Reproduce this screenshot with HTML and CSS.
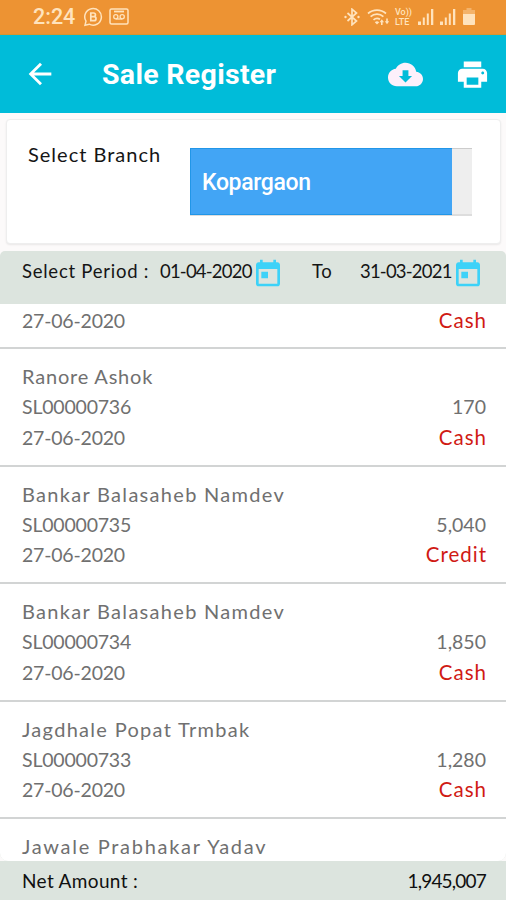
FILE: index.html
```html
<!DOCTYPE html>
<html lang="en">
<head>
    <meta charset="UTF-8">
    <meta name="viewport" content="width=device-width, initial-scale=1.0">
    <title>Sale Register</title>
    <link rel="stylesheet" href="styles.css">
</head>
<body>
    <div class="status-bar">
        <span class="clock">2:24</span>
        <svg class="status-chat" width="20" height="20" viewBox="0 0 20 20">
            <path d="M2 18.2l1-4A8.300 8.300 0 1 1 6.200 17.200z" fill="none" stroke="currentColor" stroke-width="1.500"/>
            <path d="M7.800 6h2.800a1.800 1.800 0 0 1 0 3.700H7.800zM7.800 9.700h3.200a2 2 0 0 1 0 4H7.800z" fill="none" stroke="currentColor" stroke-width="1.700"/>
        </svg>
        <svg class="status-voicemail" width="20" height="17" viewBox="0 0 20 17">
            <rect x="1" y="1" width="18" height="15" rx="1.500" fill="none" stroke="currentColor" stroke-width="1.500"/>
            <path d="M5 3.500h10" stroke="currentColor" stroke-width="1.800"/>
            <g fill="none" stroke="currentColor" stroke-width="1.300">
                <circle cx="6.800" cy="8.800" r="2.100"/>
                <circle cx="13.200" cy="8.800" r="2.100"/>
                <path d="M6.800 11h6.400"/>
            </g>
        </svg>
        <div class="status-icons">
            <svg width="16" height="18" viewBox="0 0 16 18">
                <path d="M3.500 5l9 8L8 16.800V1.200L12.500 5l-9 8" fill="none" stroke="currentColor" stroke-width="1.700"/>
                <circle cx="1.500" cy="9" r="1.200" fill="currentColor"/>
                <circle cx="14.500" cy="9" r="1.200" fill="currentColor"/>
            </svg>
            <svg class="wifi" width="23" height="18" viewBox="0 0 23 18">
                <g fill="none" stroke="currentColor" stroke-width="1.700">
                    <path d="M1 5.500a13.500 13.500 0 0 1 18 0M3.600 8.700a9.500 9.500 0 0 1 12.800 0M6.500 11.800a5.500 5.500 0 0 1 6.500-.6"/>
                </g>
                <path d="M7.800 14.200q2.200-1.800 4.400 0L10 16.600zM12.600 14.300l2.200-3 2.200 3h-1.400v2.700H14v-2.700zM17.800 13.200h1.400v-2.600h1.600v2.600h1.400l-2.200 3z" fill="currentColor"/>
            </svg>
            <span class="volte"><span>Vo))</span><span>LTE</span></span>
            <svg class="signal" width="16" height="17" viewBox="0 0 16 17" fill="currentColor">
                <path d="M0 13.500h3V17H0zM4.800 9.500h2V17h-2zM8.800 5.500h2V17h-2zM13 1h2.300v16H13z"/>
            </svg>
            <svg class="signal" width="16" height="17" viewBox="0 0 16 17" fill="currentColor">
                <path d="M0 13.500h3V17H0zM4.800 9.500h2V17h-2zM8.800 5.500h2V17h-2zM13 1h2.300v16H13z"/>
            </svg>
            <svg class="battery" width="12" height="17" viewBox="0 0 12 17" fill="currentColor">
                <path d="M3.500 0h5v2H12v4H0V2h3.500z" opacity=".4"/>
                <path d="M0 6h12v10a1 1 0 0 1-1 1H1a1 1 0 0 1-1-1z"/>
            </svg>
        </div>
    </div>

    <header class="app-bar">
        <svg class="back" width="34" height="34" viewBox="0 0 24 24">
            <path d="M20 11H7.830l5.590-5.590L12 4l-8 8 8 8 1.410-1.410L7.830 13H20v-2z" fill="currentColor"/>
        </svg>
        <h1>Sale Register</h1>
        <svg class="download" width="35" height="35" viewBox="0 0 24 24">
            <path d="M19.350 10.040C18.670 6.590 15.640 4 12 4 9.110 4 6.600 5.640 5.350 8.040 2.340 8.360 0 10.910 0 14c0 3.310 2.690 6 6 6h13c2.760 0 5-2.240 5-5 0-2.640-2.050-4.780-4.650-4.960zM16.500 13L12 17.500 7.500 13H10V9h4v4z" fill="currentColor"/>
        </svg>
        <svg class="print" width="35" height="35" viewBox="0 0 24 24">
            <path d="M19 8H5c-1.660 0-3 1.340-3 3v6h4v4h12v-4h4v-6c0-1.660-1.340-3-3-3zm-3 11H8v-5h8v5zm3-7c-.55 0-1-.45-1-1s.45-1 1-1 1 .45 1 1-.45 1-1 1zm-1-9H6v4h12V3z" fill="currentColor"/>
        </svg>
    </header>

    <section class="branch-card">
        <label>Select Branch</label>
        <div class="branch-select">
            <div class="branch-value">Kopargaon</div>
        </div>
    </section>

    <section class="period">
        <span class="period-label">Select Period :</span>
        <span class="period-date">01-04-2020</span>
        <svg width="32" height="32" viewBox="0 0 24 24">
            <path d="M19 4h-1V2h-2v2H8V2H6v2H5c-1.110 0-1.990.9-1.990 2L3 20c0 1.100.89 2 2 2h14c1.100 0 2-.9 2-2V6c0-1.100-.9-2-2-2zm0 16H5V9h14v11zM7 11h5v5H7z" fill="currentColor"/>
        </svg>
        <span class="period-to">To</span>
        <span class="period-date">31-03-2021</span>
        <svg width="32" height="32" viewBox="0 0 24 24">
            <path d="M19 4h-1V2h-2v2H8V2H6v2H5c-1.110 0-1.990.9-1.990 2L3 20c0 1.100.89 2 2 2h14c1.100 0 2-.9 2-2V6c0-1.100-.9-2-2-2zm0 16H5V9h14v11zM7 11h5v5H7z" fill="currentColor"/>
        </svg>
    </section>

    <main class="sales">
        <div class="sale sale-cut">
            <div class="line"><span class="num">27-06-2020</span><span class="mode">Cash</span></div>
        </div>
        <div class="sale">
            <div class="line name name-short">Ranore Ashok</div>
            <div class="line"><span class="num">SL00000736</span><span class="amount">170</span></div>
            <div class="line"><span class="num">27-06-2020</span><span class="mode">Cash</span></div>
        </div>
        <div class="sale">
            <div class="line name">Bankar Balasaheb Namdev</div>
            <div class="line"><span class="num">SL00000735</span><span class="amount">5,040</span></div>
            <div class="line"><span class="num">27-06-2020</span><span class="mode">Credit</span></div>
        </div>
        <div class="sale">
            <div class="line name">Bankar Balasaheb Namdev</div>
            <div class="line"><span class="num">SL00000734</span><span class="amount">1,850</span></div>
            <div class="line"><span class="num">27-06-2020</span><span class="mode">Cash</span></div>
        </div>
        <div class="sale">
            <div class="line name">Jagdhale Popat Trmbak</div>
            <div class="line"><span class="num">SL00000733</span><span class="amount">1,280</span></div>
            <div class="line"><span class="num">27-06-2020</span><span class="mode">Cash</span></div>
        </div>
        <div class="sale">
            <div class="line name name-wide">Jawale Prabhakar Yadav</div>
        </div>
    </main>

    <footer class="total">
        <span class="total-label">Net Amount :</span>
        <span class="total-value">1,945,007</span>
    </footer>
</body>
</html>
```
FILE: styles.css
```css
:root {
    --status-color: #ed9333;
    --bar-color: #00bcd9;
    --band-color: #dce4de;
    --text-color: #707070;
    --mode-color: #d01a14;
}

* {
    box-sizing: border-box;
}

body {
    margin: 0;
    height: 900px;
    overflow: hidden;
    display: flex;
    flex-direction: column;
    background-color: #fcfafa;
    font-family: "Century Gothic", Lato, sans-serif;
    color: #151515;
}

svg {
    display: block;
    flex: none;
}

.status-bar {
    height: 35px;
    flex: none;
    display: flex;
    align-items: center;
    padding: 0 31px 1px 33px;
    background-color: var(--status-color);
    border-bottom: 1px solid #d5962f;
    color: #ffe3bd;
}

.clock {
    width: 50px;
    font-family: Roboto, sans-serif;
    font-size: 21.5px;
    font-weight: 500;
}

.status-voicemail {
    margin-left: 6px;
}

.status-icons {
    display: flex;
    align-items: center;
    margin-left: auto;
}

.wifi {
    margin-left: 7px;
}

.volte {
    width: 17px;
    margin: 0 6px 0 5px;
    display: flex;
    flex-direction: column;
    font-family: Roboto, sans-serif;
    font-size: 9px;
    line-height: 10px;
    font-weight: 500;
}

.signal {
    margin-right: 6px;
}

.battery {
    margin-left: 1px;
}

.app-bar {
    height: 78px;
    flex: none;
    display: flex;
    align-items: center;
    padding: 0 16px 0 23px;
    background-color: var(--bar-color);
    color: white;
}

.app-bar h1 {
    margin: 0 auto 0 45px;
    padding-top: 1px;
    font-family: Roboto, sans-serif;
    font-size: 28.5px;
    font-weight: 700;
    letter-spacing: 0.3px;
}

.download {
    margin-right: 32px;
    color: #fdf0fb;
}

.branch-card {
    height: 125px;
    flex: none;
    display: flex;
    margin: 6px 5px 7px 6px;
    padding: 28px 28px 28px 21px;
    background-color: white;
    border: 1px solid #eeeeee;
    border-radius: 4px;
    box-shadow: 0 1px 2px rgba(0, 0, 0, 0.08);
}

.branch-card label {
    width: 162px;
    line-height: 13px;
    font-size: 20px;
    letter-spacing: 1px;
}

.branch-select {
    flex: 1;
    height: 68px;
    padding-right: 20px;
    background-color: #eeeeee;
    border-top: 1px solid #cccccc;
    border-bottom: 2px solid #dddddd;
}

.branch-value {
    height: 67px;
    margin-top: -1px;
    padding-left: 11px;
    line-height: 67px;
    background-color: #42a5f5;
    border: 1px solid #2196e8;
    border-right: none;
    color: white;
    font-family: Roboto, sans-serif;
    font-size: 23px;
    font-weight: 500;
    letter-spacing: -0.35px;
}

.period {
    height: 53px;
    flex: none;
    display: flex;
    align-items: flex-start;
    padding: 6px 21px 0 22px;
    background-color: var(--band-color);
    border-radius: 5px 5px 0 0;
    line-height: 28px;
    font-size: 18.5px;
    white-space: nowrap;
}

.period svg {
    color: #3dd2f8;
}

.period-label {
    width: 138px;
    letter-spacing: 0.75px;
}

.period-date {
    width: 92px;
    letter-spacing: -0.8px;
}

.period-to {
    width: 48px;
    margin-left: 28px;
    letter-spacing: 0.5px;
}

.sales {
    flex: 1;
    min-height: 0;
    overflow: hidden;
    background-color: var(--band-color);
    border-radius: 0 0 8px 8px;
}

.sale {
    height: 117.5px;
    padding: 13px 20px 0 22px;
    background-color: white;
    border-bottom: 2px solid #d2d4d4;
    color: var(--text-color);
}

.sale-cut {
    height: 45px;
    padding-top: 2px;
}

.line {
    display: flex;
    justify-content: space-between;
    height: 30.3px;
    line-height: 30px;
    font-size: 19.5px;
}

.name {
    line-height: 28px;
    font-size: 20px;
    letter-spacing: 1.3px;
}

.name-short {
    letter-spacing: 0.8px;
}

.name-wide {
    letter-spacing: 1.7px;
}

.num {
    letter-spacing: -0.2px;
}

.mode {
    margin-right: -1px;
    line-height: 28px;
    font-size: 20.5px;
    letter-spacing: 1px;
    color: var(--mode-color);
}

.total {
    height: 39px;
    flex: none;
    display: flex;
    justify-content: space-between;
    padding: 0 20px 0 22px;
    line-height: 40px;
    background-color: var(--band-color);
    font-size: 19px;
    color: #101010;
}

.total-label {
    letter-spacing: 0.35px;
}

.total-value {
    letter-spacing: -0.8px;
}
```
